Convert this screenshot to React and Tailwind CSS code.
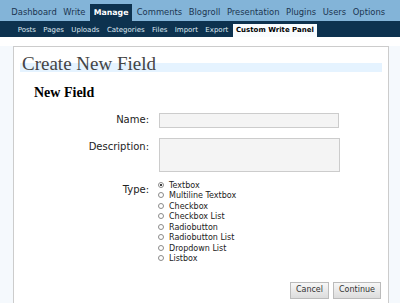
import React from 'react';

const topMenu = ['Dashboard', 'Write', 'Manage', 'Comments', 'Blogroll', 'Presentation', 'Plugins', 'Users', 'Options'];
const subMenu = ['Posts', 'Pages', 'Uploads', 'Categories', 'Files', 'Import', 'Export', 'Custom Write Panel'];
const types = ['Textbox', 'Multiline Textbox', 'Checkbox', 'Checkbox List', 'Radiobutton', 'Radiobutton List', 'Dropdown List', 'Listbox'];

const sans = { fontFamily: '"DejaVu Sans", Verdana, sans-serif' };

function Radio({ checked }) {
    return (
        <span className="w-[6px] h-[6px] rounded-full border border-[#8a8a8a] bg-white flex items-center justify-center shrink-0 mt-[1px]">
            {checked && <span className="w-[2px] h-[2px] rounded-full bg-black" />}
        </span>
    );
}

export default function App() {
    return (
        <div className="w-[400px] h-[303px] overflow-hidden bg-white" style={sans}>
            {/* menu principal */}
            <div className="h-[21px] bg-[#83b4d8] flex items-end pl-[8px]">
                {topMenu.map(m => m === 'Manage' ? (
                    <span key={m} className="h-[17px] px-[4px] bg-[#0d324f] text-white font-bold text-[7.8px] leading-[17px] mx-[1px]">{m}</span>
                ) : (
                    <span key={m} className="h-[17px] px-[3.3px] text-[#1b3550] text-[8.4px] leading-[17px]">{m}</span>
                ))}
            </div>

            {/* submenu */}
            <div className="h-[16px] bg-[#0d324f] flex items-end pl-[14px]">
                {subMenu.map(m => m === 'Custom Write Panel' ? (
                    <span key={m} className="h-[13px] px-[3px] bg-[#f9fcfe] text-black font-bold text-[7px] leading-[13px] ml-[1px]">{m}</span>
                ) : (
                    <span key={m} className="h-[13px] px-[3.7px] text-[#dde8f1] text-[7px] leading-[13px]">{m}</span>
                ))}
            </div>

            <div className="h-[9px]" />

            <div className="bg-[#f5f9fd] pl-[13px] pr-[11px] h-[260px]">
                <div className="bg-white border border-[#cccccc] h-[280px]">
                    <h2
                        className="mt-[16px] mx-[6px] pl-[2px] text-[19px] leading-[1px] h-[1px] border-b-[9px] border-[#e5f3ff] text-[#444]"
                        style={{ fontFamily: '"Liberation Serif", "Times New Roman", serif' }}
                    >
                        Create New Field
                    </h2>

                    <h3
                        className="ml-[20px] mt-[13px] text-[14px] leading-[16px] font-bold text-black"
                        style={{ fontFamily: '"Liberation Serif", "Times New Roman", serif' }}
                    >
                        New Field
                    </h3>

                    <div className="grid grid-cols-[135px_181px] gap-x-[10px] mt-[12px] text-[10px] text-[#222]">
                        <div className="text-right leading-[14px]">Name:</div>
                        <div className="h-[15px] bg-[#f4f4f4] border border-[#cccccc] w-[180px]" />

                        <div className="text-right leading-[14px] mt-[11px] pt-[1px]">Description:</div>
                        <div className="h-[34px] bg-[#f4f4f4] border border-[#cccccc] mt-[10px]" />

                        <div className="text-right leading-[14px] mt-[11px]">Type:</div>
                        <div className="mt-[9px] flex flex-col">
                            {types.map((t, i) => (
                                <label key={t} className="flex items-start gap-[5px] h-[10.45px] text-[8px] leading-[9px] text-[#222] -ml-[1px]">
                                    <Radio checked={i === 0} />
                                    <span>{t}</span>
                                </label>
                            ))}
                        </div>
                    </div>

                    <div className="flex justify-end gap-[4px] mr-[7px] mt-[17px]">
                        <button className="h-[17px] px-[5px] text-[8px] text-[#333] border border-[#bbbbbb] bg-gradient-to-b from-[#f7f7f7] to-[#dcdcdc]">Cancel</button>
                        <button className="h-[17px] px-[5px] text-[8px] text-[#333] border border-[#bbbbbb] bg-gradient-to-b from-[#f7f7f7] to-[#dcdcdc]">Continue</button>
                    </div>
                </div>
            </div>
        </div>
    );
}
